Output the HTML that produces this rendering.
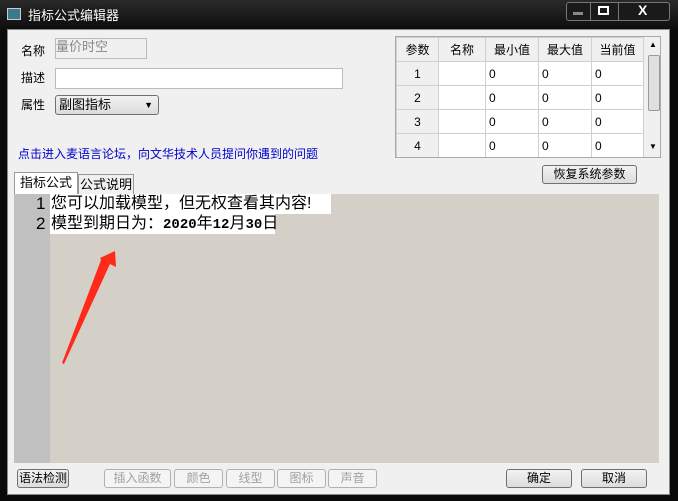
<!DOCTYPE html><html><head><meta charset="utf-8"><style>
*{margin:0;padding:0;box-sizing:border-box}
body{width:678px;height:501px;background:#0a0a0a;position:relative;overflow:hidden;font-family:"Liberation Sans","Noto Sans CJK SC",sans-serif;font-size:12px;color:#000}
.a{position:absolute}
.client{left:7px;top:29px;width:663px;height:466px;background:#f0f0f0;border:1px solid #888}
.btn{position:absolute;height:19px;border:1px solid #707070;border-radius:3px;background:linear-gradient(#f2f2f2,#dcdcdc);text-align:center;line-height:17px;font-size:12px}
.dis{border-color:#adb2b5;color:#a0a0a0;background:#f4f4f4}
table{border-collapse:collapse;font-size:12px}
td{border:1px solid #d0d0d0;height:24px;padding-left:3px;background:#fff}
</style></head><body>
<div class="a" style="left:0;top:0;width:678px;height:30px;background:linear-gradient(#2a2a2a,#0d0d0d)"></div>
<div class="a" style="left:7px;top:8px;width:14px;height:12px;background:#3a7a8a;border:1px solid #ccc"></div>
<div class="a" style="left:28px;top:5px;color:#fff;font-size:13px;text-shadow:0 0 3px #000">指标公式编辑器</div>
<div class="a" style="left:566px;top:2px;width:104px;height:19px;border:1px solid #777;border-radius:3px;background:#1a1a1a"></div>
<div class="a" style="left:590px;top:2px;width:1px;height:19px;background:#777"></div>
<div class="a" style="left:618px;top:2px;width:1px;height:19px;background:#777"></div>
<div class="a" style="left:573px;top:12px;width:10px;height:3px;background:#888"></div>
<div class="a" style="left:598px;top:6px;width:11px;height:9px;border:2px solid #fff"></div>
<div class="a" style="left:638px;top:2px;color:#fff;font-weight:bold;font-size:14px">X</div>
<div class="a client"></div>
<div class="a" style="left:21px;top:42px">名称</div>
<div class="a" style="left:55px;top:38px;width:92px;height:21px;border:1px solid #bbb;color:#888;font-size:13px;line-height:16px">量价时空</div>
<div class="a" style="left:21px;top:69px">描述</div>
<div class="a" style="left:55px;top:68px;width:288px;height:21px;border:1px solid #bbb;background:#fff"></div>
<div class="a" style="left:21px;top:96px">属性</div>
<div class="a" style="left:55px;top:95px;width:104px;height:20px;border:1px solid #707070;border-radius:3px;background:linear-gradient(#f2f2f2,#dcdcdc);padding-left:3px;line-height:18px;font-size:13px">副图指标<span style="position:absolute;right:5px;top:0;font-size:9px">▼</span></div>
<div class="a" style="left:18px;top:145px;color:#0000cc;font-size:12px">点击进入麦语言论坛，向文华技术人员提问你遇到的问题</div>
<div class="a" style="left:395px;top:36px;width:266px;height:122px;border:1px solid #aaa;overflow:hidden;background:#fff">
<table style="width:248px">
<tr style="text-align:center"><td style="width:42px;background:#f0f0f0;padding:0">参数</td><td style="width:47px;background:#f0f0f0;padding:0">名称</td><td style="width:53px;background:#f0f0f0;padding:0">最小值</td><td style="width:53px;background:#f0f0f0;padding:0">最大值</td><td style="background:#f0f0f0;padding:0">当前值</td></tr>
<tr><td style="text-align:center;background:#f0f0f0;padding:0">1</td><td></td><td>0</td><td>0</td><td>0</td></tr>
<tr><td style="text-align:center;background:#f0f0f0;padding:0">2</td><td></td><td>0</td><td>0</td><td>0</td></tr>
<tr><td style="text-align:center;background:#f0f0f0;padding:0">3</td><td></td><td>0</td><td>0</td><td>0</td></tr>
<tr><td style="text-align:center;background:#f0f0f0;padding:0">4</td><td></td><td>0</td><td>0</td><td>0</td></tr>
</table>
<div class="a" style="left:248px;top:0;width:17px;height:120px;background:#f0f0f0"></div>
<div class="a" style="left:252px;top:18px;width:12px;height:56px;border:1px solid #999;border-radius:2px;background:#e0e0e0"></div>
<div class="a" style="left:253px;top:3px;font-size:8px">▲</div>
<div class="a" style="left:253px;top:105px;font-size:8px">▼</div>
</div>
<div class="btn" style="left:542px;top:165px;width:95px">恢复系统参数</div>
<div class="a" style="left:14px;top:172px;width:64px;height:23px;border:1px solid #999;border-bottom:none;background:#fff;text-align:center;line-height:20px;font-size:13px">指标公式</div>
<div class="a" style="left:78px;top:174px;width:56px;height:21px;border:1px solid #999;border-bottom:none;background:#f0f0f0;text-align:center;line-height:19px;font-size:13px">公式说明</div>
<div class="a" style="left:14px;top:194px;width:645px;height:269px;background:#d4d0c8"></div>
<div class="a" style="left:14px;top:194px;width:36px;height:269px;background:#c0c0c0"></div>
<div class="a" style="left:50px;top:194px;width:281px;height:20px;background:#fff"></div>
<div class="a" style="left:50px;top:214px;width:225px;height:20px;background:#fff"></div>
<div class="a" style="left:36px;top:194px;font-size:17px;line-height:20px">1</div>
<div class="a" style="left:36px;top:214px;font-size:17px;line-height:20px">2</div>
<div class="a" style="left:51px;top:194px;font-size:16px;line-height:20px;white-space:nowrap">您可以加载模型，但无权查看其内容!</div>
<div class="a" style="left:51px;top:214px;font-size:16px;line-height:20px;white-space:nowrap">模型到期日为：<b style="font-family:'Liberation Mono',monospace;font-size:14px">2020</b>年<b style="font-family:'Liberation Mono',monospace;font-size:14px">12</b>月<b style="font-family:'Liberation Mono',monospace;font-size:14px">30</b>日</div>
<svg class="a" style="left:0;top:0" width="678" height="501"><polygon points="115,251 116,267 110,264 64,364 62,363 101,260 100,258" fill="#ff2a1a"/></svg>
<div class="btn" style="left:17px;top:469px;width:52px">语法检测</div>
<div class="btn dis" style="left:104px;top:469px;width:67px">插入函数</div>
<div class="btn dis" style="left:174px;top:469px;width:49px">颜色</div>
<div class="btn dis" style="left:226px;top:469px;width:49px">线型</div>
<div class="btn dis" style="left:277px;top:469px;width:49px">图标</div>
<div class="btn dis" style="left:328px;top:469px;width:49px">声音</div>
<div class="btn" style="left:506px;top:469px;width:66px">确定</div>
<div class="btn" style="left:581px;top:469px;width:66px">取消</div>
</body></html>
